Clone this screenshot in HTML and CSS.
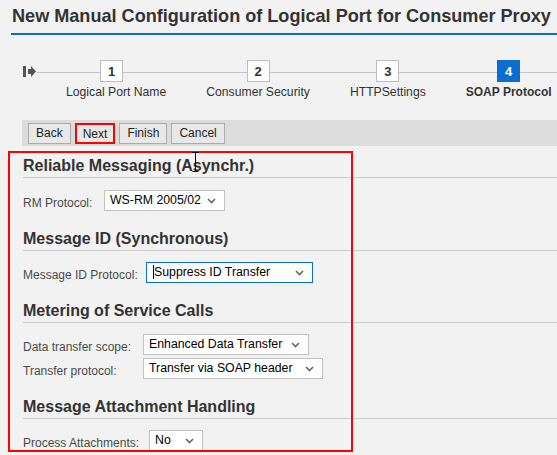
FILE: index.html
```html
<!DOCTYPE html>
<html lang="en">
<head>
<meta charset="utf-8">
<title>New Manual Configuration of Logical Port for Consumer Proxy</title>
<link rel="stylesheet" href="styles.css">
</head>
<body>
<div class="page">
  <header class="title-bar">
    <h1 class="title">New Manual Configuration of Logical Port for Consumer Proxy</h1>
  </header>

  <div class="stepper">
    <svg class="start-icon" width="13" height="11" viewBox="0 0 13 11" aria-hidden="true">
      <rect x="0" y="0" width="3" height="11" fill="#555"/>
      <path d="M5 3 H8 V0 L13 5.5 L8 11 V8 H5 Z" fill="#555"/>
    </svg>
    <ol class="steps">
      <li class="step step-first"><span class="step-box">1</span><span class="step-label">Logical Port Name</span></li>
      <li class="step"><span class="step-box">2</span><span class="step-label">Consumer Security</span></li>
      <li class="step"><span class="step-box">3</span><span class="step-label">HTTPSettings</span></li>
      <li class="step step-active"><span class="step-box">4</span><span class="step-label">SOAP Protocol</span></li>
    </ol>
  </div>

  <div class="toolbar">
    <button class="btn">Back</button>
    <button class="btn btn-marked">Next</button>
    <button class="btn">Finish</button>
    <button class="btn">Cancel</button>
  </div>

  <main class="content">
    <section class="group">
      <h2 class="group-title">Reliable Messaging (Asynchr.)</h2>
      <div class="fields fields-rm">
        <span class="field-label">RM Protocol:</span>
        <div class="select select-rm"><span>WS-RM 2005/02</span><svg class="chev" width="9" height="6" viewBox="0 0 9 6"><path d="M1 1 L4.5 4.5 L8 1" fill="none" stroke="#666" stroke-width="1.6"/></svg></div>
      </div>
    </section>

    <section class="group">
      <h2 class="group-title">Message ID (Synchronous)</h2>
      <div class="fields fields-msg">
        <span class="field-label">Message ID Protocol:</span>
        <div class="select select-msg select-focus"><span><span class="caret"></span>Suppress ID Transfer</span><svg class="chev" width="9" height="6" viewBox="0 0 9 6"><path d="M1 1 L4.5 4.5 L8 1" fill="none" stroke="#666" stroke-width="1.6"/></svg></div>
      </div>
    </section>

    <section class="group">
      <h2 class="group-title">Metering of Service Calls</h2>
      <div class="fields fields-meter">
        <span class="field-label">Data transfer scope:</span>
        <div class="select select-scope"><span>Enhanced Data Transfer</span><svg class="chev" width="9" height="6" viewBox="0 0 9 6"><path d="M1 1 L4.5 4.5 L8 1" fill="none" stroke="#666" stroke-width="1.6"/></svg></div>
        <span class="field-label">Transfer protocol:</span>
        <div class="select select-proto"><span>Transfer via SOAP header</span><svg class="chev" width="9" height="6" viewBox="0 0 9 6"><path d="M1 1 L4.5 4.5 L8 1" fill="none" stroke="#666" stroke-width="1.6"/></svg></div>
      </div>
    </section>

    <section class="group">
      <h2 class="group-title">Message Attachment Handling</h2>
      <div class="fields fields-attach">
        <span class="field-label">Process Attachments:</span>
        <div class="select select-no"><span>No</span><svg class="chev" width="9" height="6" viewBox="0 0 9 6"><path d="M1 1 L4.5 4.5 L8 1" fill="none" stroke="#666" stroke-width="1.6"/></svg></div>
      </div>
    </section>
  </main>

  <div class="annotation"></div>
  <svg class="mouse-cursor" width="7" height="20" viewBox="0 0 7 20" aria-hidden="true">
    <path d="M0.5 0.5 H6.5 M3.5 0.5 V19.5 M0.5 19.5 H6.5" fill="none" stroke="#000" stroke-width="1"/>
  </svg>
</div>
</body>
</html>
```

FILE: styles.css
```css
* { box-sizing: border-box; }

html, body {
  margin: 0;
  padding: 0;
  background: #f2f2f2;
}

body {
  font-family: "Liberation Sans", Arial, sans-serif;
  color: #333;
}

.page {
  position: relative;
  width: 557px;
  height: 455px;
  overflow: hidden;
}

/* Title */
.title-bar {
  margin-left: 11px;
  padding: 5px 0 6px 1px;
  border-bottom: 2px solid #0a6ed1;
}

.title {
  margin: 0;
  font-size: 18.1px;
  line-height: 22px;
  font-weight: bold;
  color: #333;
  white-space: nowrap;
}

/* Stepper */
.stepper {
  display: flex;
  align-items: flex-start;
  margin-top: 25px;
  padding-left: 23px;
  background: linear-gradient(#c4c4c4, #c4c4c4) no-repeat 37px 12px / calc(100% - 37px) 1px;
}

.start-icon {
  margin-top: 6px;
  flex: none;
}

.steps {
  display: flex;
  gap: 40px;
  margin: 0 0 0 30px;
  padding: 0;
  list-style: none;
}

.step {
  display: flex;
  flex-direction: column;
  align-items: center;
}

.step-box {
  width: 23px;
  height: 22px;
  border: 1px solid #bdbdbd;
  background: #fff;
  display: flex;
  align-items: center;
  justify-content: center;
  font-size: 13px;
  font-weight: bold;
  color: #333;
}

.step-first .step-box {
  margin-right: 9px;
}

.step-label {
  margin-top: 3px;
  font-size: 12.2px;
  line-height: 14px;
  color: #333;
  white-space: nowrap;
}

.step-active .step-box {
  background: #0a6ed1;
  border-color: #0a6ed1;
  color: #fff;
}

.step-active .step-label {
  font-size: 12px;
  font-weight: bold;
}

/* Toolbar */
.toolbar {
  display: flex;
  gap: 4px;
  margin: 21px 0 0 22px;
  padding: 3px 6px 2px;
  background: #dcdcdc;
}

.btn {
  height: 21px;
  padding: 0 7px;
  margin: 0;
  border: 1px solid #ababab;
  background: #e8e8e8;
  font-family: "Liberation Sans", Arial, sans-serif;
  font-size: 12px;
  line-height: 19px;
  color: #222;
  border-radius: 0;
}

.btn-marked {
  border: 2px solid #ff0000;
  padding: 0 6px;
}

/* Content */
.content {
  margin-top: 11px;
  padding-left: 23px;
}

.group + .group {
  margin-top: 19px;
}

.group-title {
  margin: 0;
  padding-bottom: 2px;
  font-size: 16px;
  line-height: 18px;
  font-weight: bold;
  color: #333;
  border-bottom: 1px solid #cccccc;
}

.fields {
  display: grid;
  row-gap: 3px;
  margin-top: 11px;
  justify-content: start;
}

.group:first-child .fields {
  margin-top: 12px;
}

.fields-rm { grid-template-columns: 81px auto; }
.fields-msg { grid-template-columns: 123px auto; }
.fields-meter { grid-template-columns: 120px auto; }
.fields-attach { grid-template-columns: 126px auto; }

.field-label {
  align-self: end;
  margin-bottom: 1px;
  font-size: 12px;
  line-height: 14px;
  color: #4a4a4a;
  white-space: nowrap;
}

.select {
  display: flex;
  align-items: center;
  justify-content: space-between;
  height: 21px;
  padding: 0 8px 0 5px;
  border: 1px solid #c2c2c2;
  background: #fff;
  font-size: 12.3px;
  line-height: 19px;
  color: #000;
  white-space: nowrap;
}

.select-focus {
  border-color: #0a6ed1;
}

.select-rm { width: 121px; }
.select-msg { width: 167px; padding-left: 6px; }
.select-scope { width: 166px; }
.select-proto { width: 180px; }
.select-no { width: 54px; }

.chev {
  flex: none;
}

.caret {
  display: inline-block;
  width: 1px;
  height: 14px;
  background: #000;
  vertical-align: -3px;
}

/* Overlays */
.annotation {
  position: absolute;
  left: 8px;
  top: 151px;
  width: 345px;
  height: 301px;
  border: 2px solid #ff0000;
  pointer-events: none;
}

.mouse-cursor {
  position: absolute;
  left: 192px;
  top: 152px;
}
```
